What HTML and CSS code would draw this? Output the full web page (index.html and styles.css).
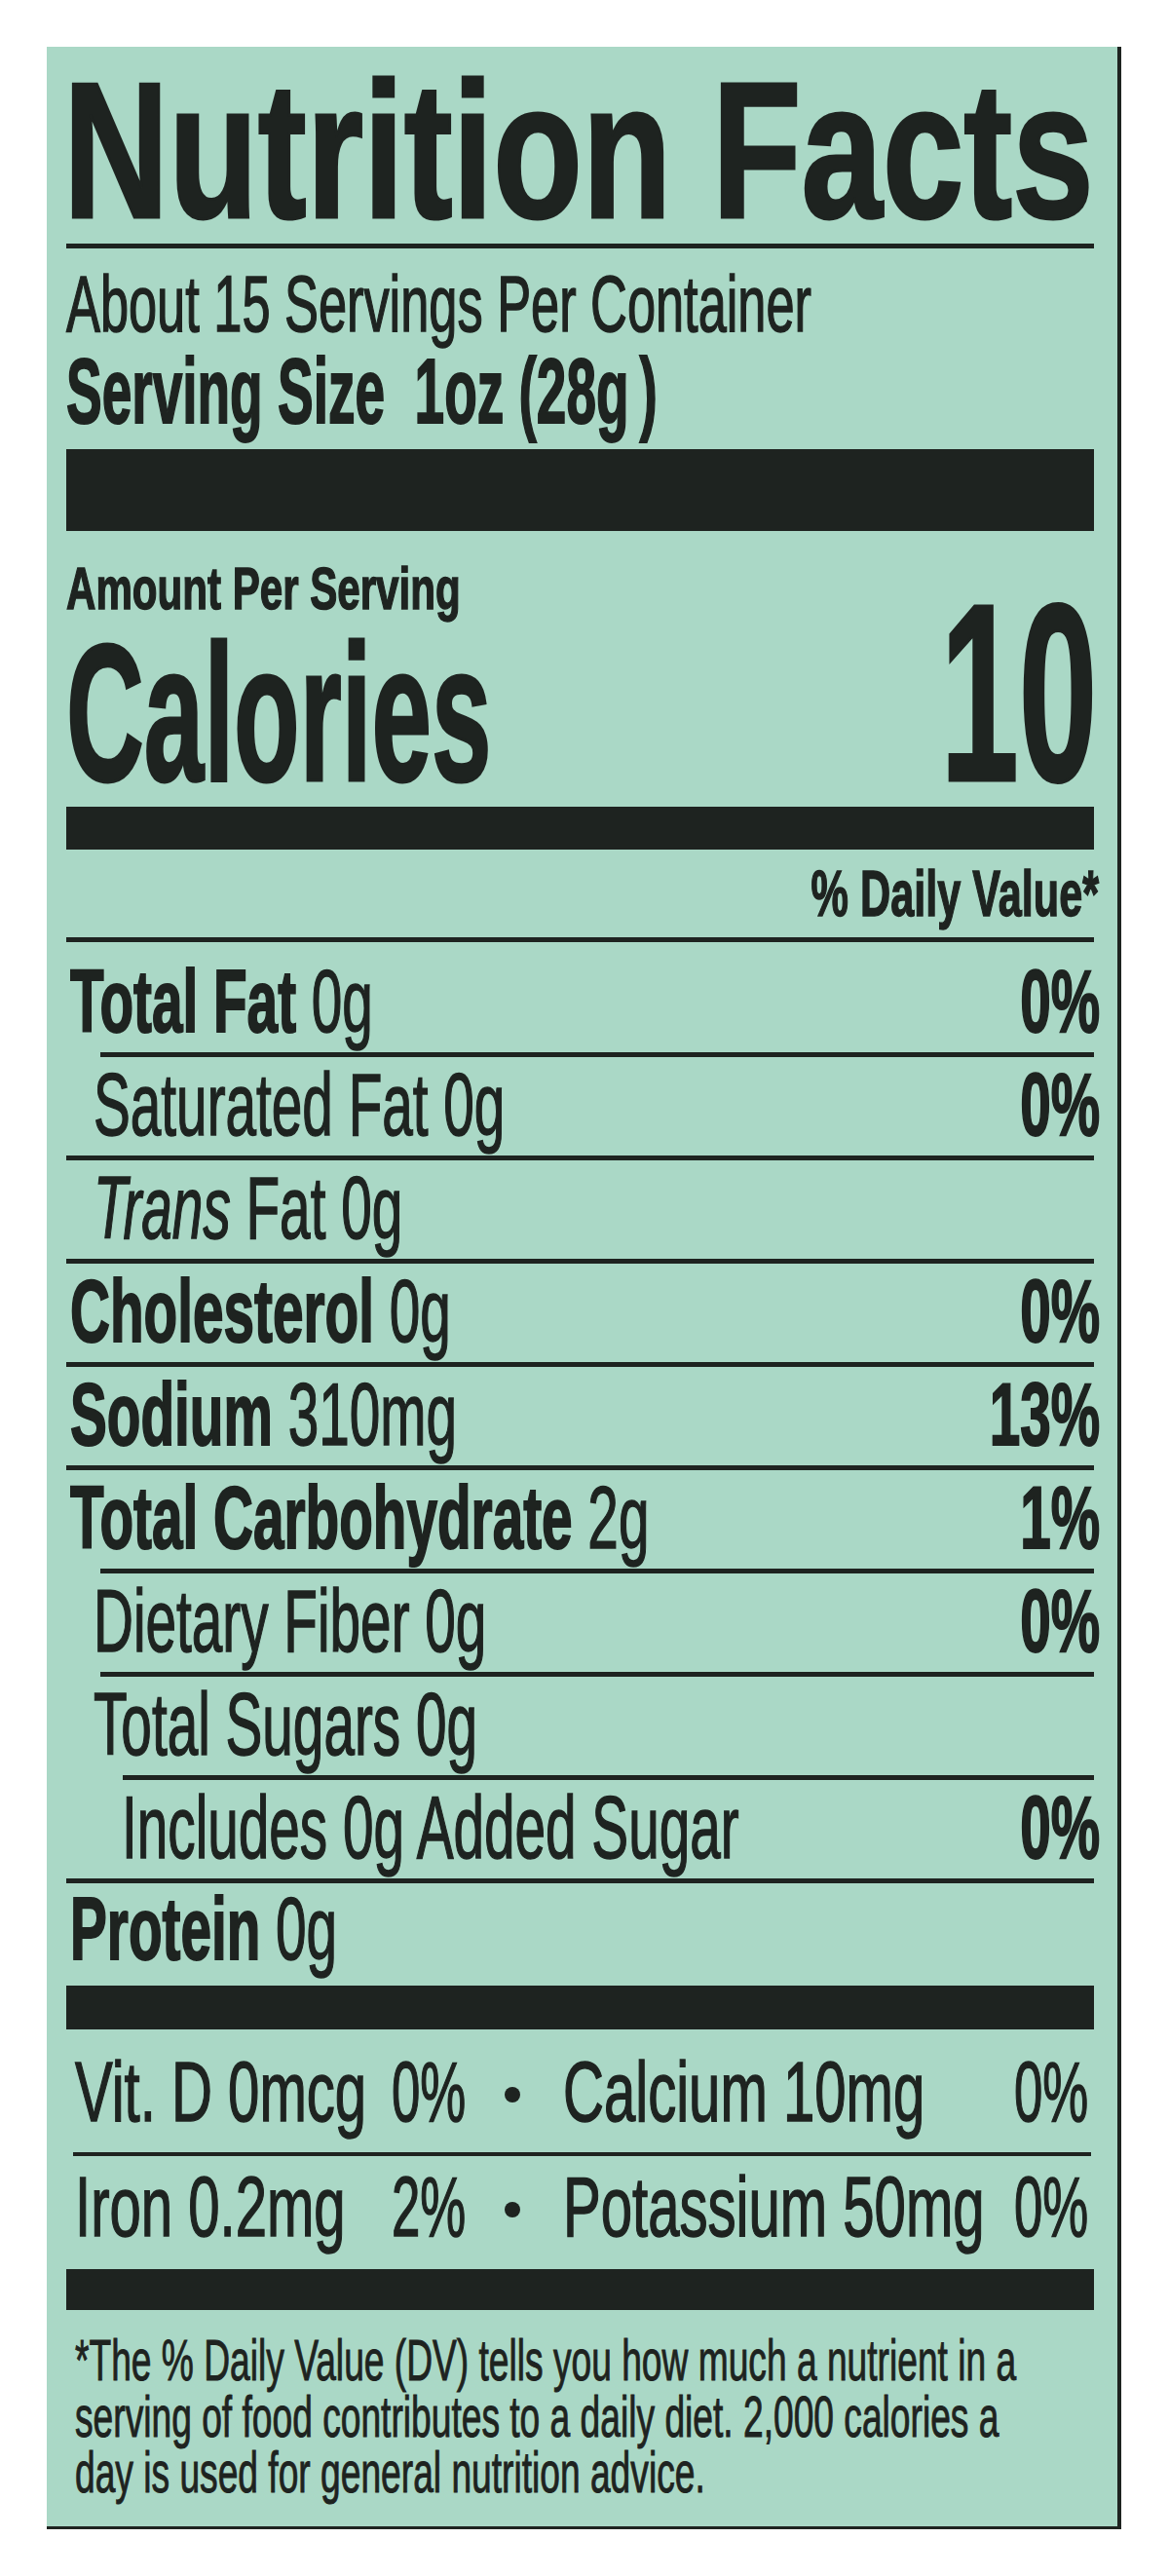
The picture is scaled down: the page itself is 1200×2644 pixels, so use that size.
FILE: index.html
```html
<!DOCTYPE html>
<html lang="en">
<head>
<meta charset="utf-8">
<title>Nutrition Facts</title>
<link rel="stylesheet" href="styles.css">
</head>
<body>
<main class="label">
  <h1 class="title"><span class="sx">Nutrition Facts</span></h1>
  <div class="rule"></div>
  <p class="servings"><span class="sx">About 15 Servings Per Container</span></p>
  <p class="size"><span class="sx">Serving Size&nbsp;&nbsp;1oz (28g&thinsp;)</span></p>
  <div class="bar bar-top"></div>

  <section class="cal">
    <div class="cal-left">
      <div class="amount"><span class="sx">Amount Per Serving</span></div>
      <div class="cal-label"><span class="sx">Calories</span></div>
    </div>
    <div class="cal-num"><span class="sx">10</span></div>
  </section>
  <div class="bar bar-cal"></div>

  <div class="dv"><span class="sx">% Daily Value*</span></div>
  <div class="rule"></div>

  <div class="row first">
    <div class="name"><span class="sx"><b>Total Fat</b> 0g</span></div>
    <div class="pct"><span class="sx">0%</span></div>
  </div>
  <div class="rule ind1"></div>
  <div class="row ind1">
    <div class="name"><span class="sx">Saturated Fat 0g</span></div>
    <div class="pct"><span class="sx">0%</span></div>
  </div>
  <div class="rule"></div>
  <div class="row ind1">
    <div class="name"><span class="sx"><i>Trans</i> Fat 0g</span></div>
  </div>
  <div class="rule"></div>
  <div class="row">
    <div class="name"><span class="sx"><b>Cholesterol</b> 0g</span></div>
    <div class="pct"><span class="sx">0%</span></div>
  </div>
  <div class="rule"></div>
  <div class="row">
    <div class="name"><span class="sx"><b>Sodium</b> 310mg</span></div>
    <div class="pct"><span class="sx">13%</span></div>
  </div>
  <div class="rule"></div>
  <div class="row">
    <div class="name"><span class="sx"><b>Total Carbohydrate</b> 2g</span></div>
    <div class="pct"><span class="sx">1%</span></div>
  </div>
  <div class="rule ind1"></div>
  <div class="row ind1">
    <div class="name"><span class="sx">Dietary Fiber 0g</span></div>
    <div class="pct"><span class="sx">0%</span></div>
  </div>
  <div class="rule ind1"></div>
  <div class="row ind1">
    <div class="name"><span class="sx">Total Sugars 0g</span></div>
  </div>
  <div class="rule ind2"></div>
  <div class="row ind2">
    <div class="name"><span class="sx">Includes 0g Added Sugar</span></div>
    <div class="pct"><span class="sx">0%</span></div>
  </div>
  <div class="rule"></div>
  <div class="row protein">
    <div class="name"><span class="sx"><b>Protein</b> 0g</span></div>
  </div>
  <div class="bar bar-mid"></div>

  <div class="vit v1">
    <div class="c1"><span class="sx">Vit. D 0mcg</span></div>
    <div class="c2"><span class="sx">0%</span></div>
    <div class="c3"><span class="dot"></span></div>
    <div class="c4"><span class="sx">Calcium 10mg</span></div>
    <div class="c5"><span class="sx">0%</span></div>
  </div>
  <div class="rule thin"></div>
  <div class="vit v2">
    <div class="c1"><span class="sx">Iron 0.2mg</span></div>
    <div class="c2"><span class="sx">2%</span></div>
    <div class="c3"><span class="dot"></span></div>
    <div class="c4"><span class="sx">Potassium 50mg</span></div>
    <div class="c5"><span class="sx">0%</span></div>
  </div>
  <div class="bar bar-bot"></div>

  <p class="foot"><span class="sx">*The % Daily Value (DV) tells you how much a nutrient in a<br>serving of food contributes to a daily diet. 2,000 calories a<br>day is used for general nutrition advice.</span></p>
</main>
</body>
</html>
```

FILE: styles.css
```css
html, body {
  margin: 0;
  padding: 0;
  background: #ffffff;
}

body {
  font-family: "Liberation Sans", Arial, Helvetica, sans-serif;
  color: #1e2320;
  -webkit-text-stroke: 1.5px #1e2320;
}

.label {
  width: 1055px;
  margin: 48px 0 0 48px;
  padding: 12px 24px 25px 20px;
  background: #aad8c6;
  border-right: 4px solid #1e2320;
  border-bottom: 3px solid #1e2320;
}

/* condensed text: the label face is a narrow sans, emulated by a horizontal scale.
   Each scaled run is its own block box so that only its scaled extent counts
   toward overflow. */
.sx {
  display: block;
  width: max-content;
  white-space: nowrap;
  transform: scaleX(var(--k, 1));
  transform-origin: 0 50%;
}

.title {
  margin: 0 0 0 -3px;
  font-size: 198px;
  line-height: 190px;
  font-weight: 700;
  -webkit-text-stroke-width: 3px;
  --k: 0.757;
}

.rule {
  height: 5px;
  background: #1e2320;
}
.rule.ind1 { margin-left: 35px; }
.rule.ind2 { margin-left: 58px; }
.rule.thin {
  height: 4px;
  margin: 0 3px 0 7px;
}

.servings {
  margin: 15px 0 0;
  font-size: 81px;
  line-height: 84px;
  --k: 0.646;
}

.size {
  margin: 0;
  font-size: 94px;
  line-height: 96px;
  font-weight: 700;
  -webkit-text-stroke-width: 2px;
  --k: 0.585;
}

.bar { background: #1e2320; }
.bar-top { margin-top: 11px; height: 84px; }
.bar-cal { margin-top: 21px; height: 44px; }
.bar-mid { height: 45px; }
.bar-bot { height: 42px; }

.cal {
  display: flex;
  justify-content: space-between;
  align-items: flex-end;
  margin-top: 29px;
}
.cal-left {
  flex: 1 1 0;
  min-width: 0;
}
.amount {
  font-size: 61px;
  line-height: 60px;
  font-weight: 700;
  -webkit-text-stroke-width: 1.5px;
  --k: 0.69;
}
.cal-label {
  margin-top: 23px;
  font-size: 200px;
  line-height: 150px;
  font-weight: 700;
  -webkit-text-stroke-width: 3px;
  --k: 0.553;
}
.cal-num {
  flex: none;
  margin-right: -3px;
  font-size: 260px;
  line-height: 192px;
  font-weight: 700;
  -webkit-text-stroke-width: 3px;
  --k: 0.556;
}
.cal-num .sx,
.dv .sx,
.pct .sx,
.vit .c5 .sx {
  transform-origin: 100% 50%;
}

.dv {
  margin-right: -5px;
  font-size: 67px;
  line-height: 90px;
  font-weight: 700;
  -webkit-text-stroke-width: 1.5px;
  --k: 0.645;
}
.dv .sx { margin-left: auto; }

.row {
  display: flex;
  font-size: 90px;
  line-height: 99px;
  padding-bottom: 2px;
  --k: 0.63;
}
.row.first { padding-top: 12px; }
.row.protein {
  line-height: 95px;
  padding-bottom: 10px;
}
.row .name {
  flex: 1 1 0;
  min-width: 0;
  padding-left: 4px;
}
.row.ind1 .name { padding-left: 28px; }
.row.ind2 .name { padding-left: 57px; }
.row .pct {
  flex: none;
  margin-right: -6px;
  font-weight: 700;
  -webkit-text-stroke-width: 2px;
}
.name b {
  font-weight: 700;
  -webkit-text-stroke-width: 2px;
}
.name i { font-style: italic; }

.vit {
  display: grid;
  grid-template-columns: 334px 100px 76px minmax(0, 1fr) auto;
  font-size: 88px;
  line-height: 100px;
  --k: 0.66;
}
.vit.v1 { padding: 14px 0 12px; }
.vit.v2 { padding: 2px 0 14px; }
.vit .c1 { padding-left: 9px; min-width: 0; }
.vit .c2 { --k: 0.6; min-width: 0; }
.vit .c5 {
  --k: 0.6;
  margin-right: 6px;
}
.dot {
  display: inline-block;
  width: 16px;
  height: 16px;
  margin-left: 16px;
  border-radius: 50%;
  background: #1e2320;
  vertical-align: 19px;
}

.foot {
  margin: 0;
  padding: 24px 0 0 9px;
  font-size: 59px;
  line-height: 57.5px;
  -webkit-text-stroke-width: 1px;
  --k: 0.63;
}
```
